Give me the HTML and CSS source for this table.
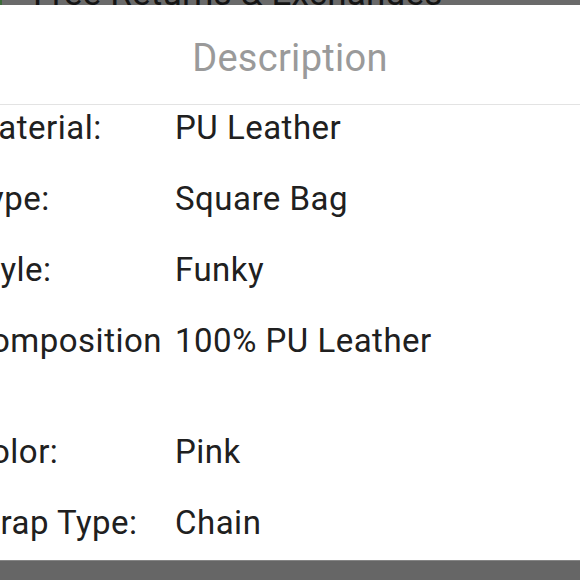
FILE: index.html
```html
<!DOCTYPE html>
<html lang="en">
<head>
<meta charset="utf-8">
<title>Description</title>
<link rel="stylesheet" href="styles.css">
</head>
<body>
<div class="page">
  <div class="topbar"><span class="topbar-text">Free Returns &amp; Exchanges</span></div>
  <section class="sheet">
    <h2 class="sheet-title">Description</h2>
    <div class="specs">
      <div class="spec-label">Material:</div><div class="spec-value">PU Leather</div>
      <div class="spec-label">Type:</div><div class="spec-value">Square Bag</div>
      <div class="spec-label">Style:</div><div class="spec-value">Funky</div>
      <div class="spec-label">Composition:</div><div class="spec-value">100% PU Leather</div>
      <div class="spec-label">Color:</div><div class="spec-value">Pink</div>
      <div class="spec-label">Strap Type:</div><div class="spec-value">Chain</div>
    </div>
  </section>
  <div class="bottombar"></div>
</div>
</body>
</html>
```
FILE: styles.css
```css
html, body {
  margin: 0;
  padding: 0;
  background: #ffffff;
}
body {
  font-family: Roboto, "Noto Sans", "Liberation Sans", sans-serif;
  overflow: hidden;
}
.page {
  width: 580px;
  height: 580px;
  display: flex;
  flex-direction: column;
  overflow: hidden;
}
.topbar {
  height: 5px;
  flex: 0 0 5px;
  background: #6a6a6a;
  border-left: 2px solid #3d6b3a;
  display: flex;
  align-items: flex-end;
  overflow: hidden;
  padding-left: 31px;
}
.topbar-text {
  font-size: 35px;
  line-height: 22px;
  letter-spacing: 0.2px;
  color: #151515;
  white-space: nowrap;
}
.sheet {
  flex: 1 1 auto;
  overflow: hidden;
  background: #ffffff;
  display: flex;
  flex-direction: column;
}
.sheet-title {
  margin: 0;
  padding: 32px 0 25px;
  font-size: 38px;
  line-height: 42px;
  letter-spacing: 0.3px;
  font-weight: 400;
  color: #9a9a9a;
  text-align: center;
  border-bottom: 1px solid #e3e3e3;
}
.specs {
  display: grid;
  grid-template-columns: 196px 1fr;
  column-gap: 10px;
  margin-left: -31px;
  padding-top: 3px;
  font-size: 33px;
  line-height: 40px;
  letter-spacing: 0.5px;
  color: #202020;
}
.spec-label,
.spec-value {
  padding-bottom: 31px;
}
.spec-label {
  overflow-wrap: anywhere;
}
.spec-value {
  white-space: nowrap;
}
.bottombar {
  flex: 0 0 20px;
  height: 20px;
  background: #666666;
  border-top: 1px solid #858585;
  box-sizing: border-box;
}
```
